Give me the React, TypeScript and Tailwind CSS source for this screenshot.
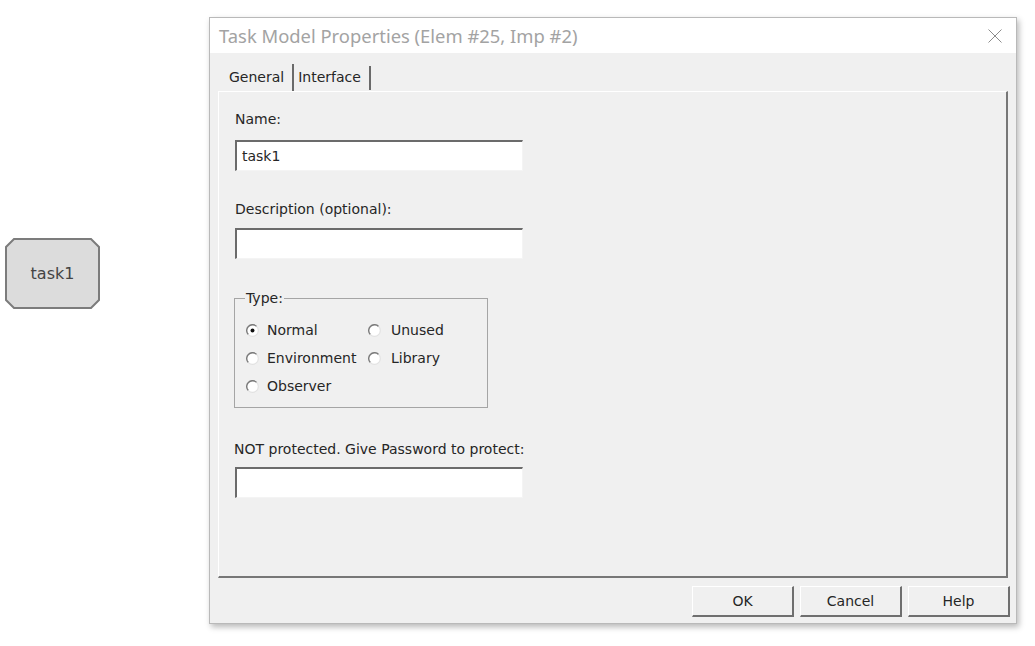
import React from 'react';

const ui = "font-['DejaVu_Sans',sans-serif] text-[14px] text-[#262626]";

function Radio({ checked }: { checked?: boolean }) {
  return (
    <svg width="13" height="13" viewBox="0 0 12 12" className="shrink-0">
      <circle cx="6" cy="6" r="5.3" fill="#fff" />
      <path d="M2.2 9.8 A5.3 5.3 0 0 1 9.8 2.2" fill="none" stroke="#7a7a7a" strokeWidth="1.3" />
      <path d="M9.8 2.2 A5.3 5.3 0 0 1 2.2 9.8" fill="none" stroke="#e2e2e2" strokeWidth="1.1" />
      {checked && <circle cx="6" cy="6" r="1.8" fill="#111" />}
    </svg>
  );
}

function TextBox({ value }: { value?: string }) {
  return (
    <div className="w-[288px] h-[31px] bg-white border-t-2 border-l-2 border-[#6b6b6b] border-r border-b border-r-[#f4f4f4] border-b-[#f4f4f4] pl-[5px] flex items-center">
      {value}
    </div>
  );
}

function Button({ label }: { label: string }) {
  return (
    <div className="w-[102px] h-[31px] bg-[#f0f0f0] border-t border-l border-white border-r-2 border-b-2 border-r-[#6f6f6f] border-b-[#6f6f6f] flex items-center justify-center">
      {label}
    </div>
  );
}

function TaskNode() {
  return (
    <div className="relative w-[95px] h-[71px] flex items-center justify-center">
      <svg width="95" height="71" viewBox="0 0 95 71" className="absolute inset-0">
        <polygon points="9,1 86,1 94,9 94,62 86,70 9,70 1,62 1,9" fill="#dcdcdc" stroke="#7c7c7c" strokeWidth="2" />
      </svg>
      <span className="relative font-['DejaVu_Sans',sans-serif] text-[16px] text-[#444]">task1</span>
    </div>
  );
}

export default function App() {
  return (
    <div className="w-[1035px] h-[646px] bg-white flex items-start">
      <div className="ml-[5px] mt-[238px]">
        <TaskNode />
      </div>

      {/* dialog */}
      <div className={`ml-[109px] mt-[17px] w-[808px] h-[607px] flex flex-col border border-[#b9b9b9] shadow-[2px_3px_6px_rgba(0,0,0,0.28)] ${ui}`}>
        <div className="h-[35px] bg-white flex items-center justify-between pl-[9px] pr-[14px]">
          <span className="font-['Noto_Sans',sans-serif] text-[18.4px] text-[#a3a3a3]">Task Model Properties (Elem #25, Imp #2)</span>
          <svg width="14" height="14" viewBox="0 0 14 14">
            <path d="M0.5 0.5 L13.5 13.5 M13.5 0.5 L0.5 13.5" stroke="#8c8c8c" strokeWidth="1" />
          </svg>
        </div>

        <div className="flex-1 bg-[#f0f0f0] flex flex-col">
          {/* tabs */}
          <div className="h-[38px] flex items-end pl-[19px]">
            <span className="pb-[3px] pr-[8px]">General</span>
            <div className="w-[2px] h-[27px] bg-[#6a6a6a]" />
            <span className="pb-[3px] pl-[4px] pr-[8px]">Interface</span>
            <div className="w-[2px] h-[24px] mb-[1px] bg-[#6a6a6a]" />
          </div>

          {/* tab page */}
          <div className="mx-[8px] h-[487px] border-t border-l border-white border-r-2 border-b-2 border-r-[#777] border-b-[#777] pl-[16px] flex flex-col items-start">
            <div className="mt-[19px] h-[16px] leading-[16px]">Name:</div>
            <div className="mt-[13px]"><TextBox value="task1" /></div>

            <div className="mt-[30px] h-[16px] leading-[16px]">Description (optional):</div>
            <div className="mt-[11px]"><TextBox /></div>

            <fieldset className="mt-[31px] -ml-px w-[254px] h-[118px] border border-[#a5a5a5] pl-[11px]">
              <legend className="px-[1px] -ml-px leading-[16px]">Type:</legend>
              <div className="mt-[14px] grid grid-cols-[122px_auto] gap-y-[8px]">
                <div className="h-[20px] flex items-center gap-[8px]"><Radio checked />Normal</div>
                <div className="h-[20px] flex items-center gap-[10px]"><Radio />Unused</div>
                <div className="h-[20px] flex items-center gap-[8px]"><Radio />Environment</div>
                <div className="h-[20px] flex items-center gap-[10px]"><Radio />Library</div>
                <div className="h-[20px] flex items-center gap-[8px]"><Radio />Observer</div>
              </div>
            </fieldset>

            <div className="mt-[33px] h-[16px] leading-[16px] -ml-px">NOT protected. Give Password to protect:</div>
            <div className="mt-[10px]"><TextBox /></div>
          </div>

          {/* buttons */}
          <div className="flex justify-end gap-[6px] pr-[6px] pt-[8px]">
            <Button label="OK" />
            <Button label="Cancel" />
            <Button label="Help" />
          </div>
        </div>
      </div>
    </div>
  );
}
